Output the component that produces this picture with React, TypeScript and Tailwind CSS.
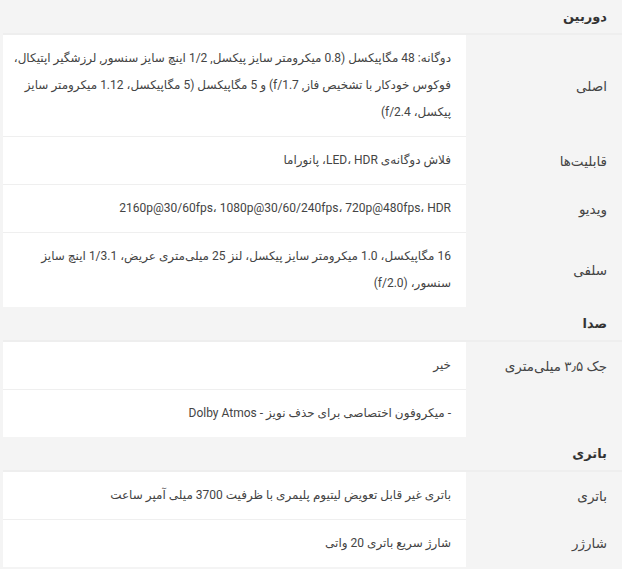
import React from "react";

type Row = { label: string; value: string };
type Section = { title: string; rows: Row[] };

const sections: Section[] = [
  {
    title: "دوربین",
    rows: [
      {
        label: "اصلی",
        value:
          "دوگانه: 48 مگاپیکسل (0.8 میکرومتر سایز پیکسل, 1/2 اینچ سایز سنسور, لرزشگیر اپتیکال، فوکوس خودکار با تشخیص فاز, f/1.7) و 5 مگاپیکسل (5 مگاپیکسل، 1.12 میکرومتر سایز پیکسل، f/2.4)",
      },
      { label: "قابلیت‌ها", value: "فلاش دوگانه‌ی LED، HDR، پانوراما" },
      { label: "ویدیو", value: "2160p@30/60fps، 1080p@30/60/240fps، 720p@480fps، HDR" },
      {
        label: "سلفی",
        value:
          "16 مگاپیکسل، 1.0 میکرومتر سایز پیکسل، لنز 25 میلی‌متری عریض، 1/3.1 اینچ سایز سنسور، (f/2.0)",
      },
    ],
  },
  {
    title: "صدا",
    rows: [
      { label: "جک ۳٫۵ میلی‌متری", value: "خیر" },
      { label: "", value: "- میکروفون اختصاصی برای حذف نویز - Dolby Atmos" },
    ],
  },
  {
    title: "باتری",
    rows: [
      { label: "باتری", value: "باتری غیر قابل تعویض لیتیوم پلیمری با ظرفیت 3700 میلی آمپر ساعت" },
      { label: "شارژر", value: "شارژ سریع باتری 20 واتی" },
    ],
  },
];

function SpecRow({ row, last }: { row: Row; last: boolean }) {
  return (
    <div className="flex items-stretch">
      <div className="w-[156px] shrink-0 flex items-center pr-[15px] text-[13.5px] text-[#444]">
        {row.label}
      </div>
      <div
        className={
          "flex-1 bg-white pr-[15px] pl-[8px] py-[10px] text-[12px] leading-[27px] text-[#444] " +
          (last ? "" : "border-b border-[#efefef]")
        }
      >
        {row.value}
      </div>
    </div>
  );
}

export default function App() {
  return (
    <div
      dir="rtl"
      className="w-[622px] min-h-[569px] bg-[#f4f4f4] pl-[3px] pb-[3px]"
      style={{ fontFamily: 'Roboto, "DejaVu Sans", sans-serif' }}
    >
      {sections.map((s) => (
        <div key={s.title}>
          <div className="h-[35px] flex items-center pr-[15px] text-[13px] font-semibold text-[#333] border-b-2 border-[#eeeeee]">
            {s.title}
          </div>
          {s.rows.map((r, i) => (
            <SpecRow key={i} row={r} last={i === s.rows.length - 1} />
          ))}
        </div>
      ))}
    </div>
  );
}
